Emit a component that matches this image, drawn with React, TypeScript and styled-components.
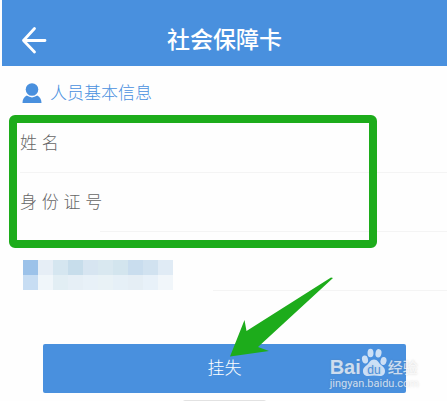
import React from "react";
import styled, { createGlobalStyle } from "styled-components";

const blue = "#4990de";
const green = "#1dac1b";
const line = "#f4f4f4";

const GlobalStyle = createGlobalStyle`
  *, *::before, *::after { box-sizing: border-box; }
  html { overflow: hidden; }
  body {
    margin: 0;
    background: #fff;
    font-family: "Liberation Sans", "Noto Sans CJK SC", sans-serif;
  }
`;

const Screen = styled.main`
  position: relative;
  min-height: 100vh;
  padding-left: 2px;
  overflow: hidden;
  background: #fefefe;
`;

const Header = styled.header`
  display: grid;
  grid-template-columns: 64px 1fr 64px;
  align-items: center;
  height: 66px;
  padding-top: 14px;
  background: ${blue};
  color: #fff;
`;

const BackButton = styled.button`
  display: flex;
  align-items: center;
  height: 40px;
  padding: 0 0 0 19px;
  border: 0;
  background: none;
  color: inherit;
`;

const Title = styled.h1`
  margin: 0;
  font-size: 23px;
  line-height: 32px;
  font-weight: 500;
  text-align: center;
  white-space: nowrap;
`;

const SectionTitle = styled.h2`
  display: flex;
  align-items: flex-start;
  gap: 8px;
  height: 48px;
  margin: 0;
  padding: 16px 20px 0;
  color: ${blue};
  font-size: 17px;
  line-height: 24px;
  font-weight: 300;
`;

const Fields = styled.div`
  position: relative;
`;

const Highlight = styled.div`
  position: absolute;
  top: 1px;
  bottom: -16px;
  left: 7px;
  right: 70px;
  border: 8px solid ${green};
  border-radius: 6px;
  pointer-events: none;
`;

const Row = styled.div<{ $lineStart: number }>`
  display: flex;
  align-items: center;
  height: 59px;
  padding-left: 18px;
  background: linear-gradient(${line}, ${line}) ${(p) => p.$lineStart}px 100% / 100% 1px no-repeat;
`;

const Label = styled.label`
  flex: none;
  color: #666;
  font-size: 17px;
  line-height: 24px;
  font-weight: 300;
`;

const Input = styled.input`
  flex: 1;
  min-width: 0;
  height: 32px;
  margin: 0 16px;
  border: 0;
  outline: 0;
  background: none;
  color: #333;
  font: inherit;
`;

const Mosaic = styled.div`
  display: grid;
  grid-template-columns: repeat(10, 15px);
  grid-auto-rows: 15px;
  padding-left: 3px;
  padding-top: 26px;
`;

const Tile = styled.span<{ $color: string }>`
  background: ${(p) => p.$color};
`;

const Action = styled.div`
  position: relative;
  margin: 53px 41px 0;
`;

const SubmitButton = styled.button`
  display: block;
  width: 100%;
  height: 49px;
  padding: 0;
  border: 0;
  border-radius: 2px;
  background: ${blue};
  color: #fff;
  font: inherit;
  font-size: 17px;
  font-weight: 300;
  line-height: 49px;
`;

const Arrow = styled.svg`
  position: absolute;
  left: calc(50% + 4px);
  bottom: 35px;
  pointer-events: none;
`;

const Watermark = styled.div`
  position: absolute;
  right: -13px;
  bottom: 2px;
  display: flex;
  flex-direction: column;
  align-items: flex-start;
  color: rgba(255, 255, 255, 0.72);
  text-shadow: 0 0 2px rgba(110, 110, 110, 0.28);
  white-space: nowrap;
  pointer-events: none;
`;

const Brand = styled.div`
  display: flex;
  align-items: flex-end;
  height: 29px;
`;

const Latin = styled.span`
  font-size: 20px;
  line-height: 20px;
  font-weight: 700;
`;

const Chinese = styled.span`
  margin-left: 1px;
  font-size: 15px;
  line-height: 18px;
  font-weight: 500;
`;

const Site = styled.span`
  font-family: Roboto, "Noto Sans", sans-serif;
  font-size: 11px;
  line-height: 14px;
`;

const HomeBar = styled.div`
  width: 83px;
  height: 4px;
  margin: 7px auto 0;
  border-radius: 2px;
  background: #e2e2e2;
`;

const tiles = [
  "#9cc2e9", "#e6eef6", "#d5e6f0", "#c7ddeb", "#d7e5f1", "#d9e8f0", "#d3e5ee", "#c9ddee", "#d1e2f0", "#e0ebf5",
  "#c7ddf3", "#f0f6fa", "#e2eef4", "#e6eff6", "#e8f1f8", "#e9f2f6", "#e6f0f7", "#e5eef5", "#e8f1f9", "#f1f6fa",
];

export default function App() {
  return (
    <>
      <GlobalStyle />
      <Screen>
        <Header>
          <BackButton type="button" aria-label="返回">
            <svg width="27" height="28" viewBox="0 0 27 28" fill="none" stroke="currentColor" strokeWidth="2.8" strokeLinecap="round" strokeLinejoin="round">
              <path d="M13.5 2.5 2.5 14.500l11 11.500M2.500 14.500H24" />
            </svg>
          </BackButton>
          <Title>社会保障卡</Title>
        </Header>
        <SectionTitle>
          <svg width="20" height="21" viewBox="0 0 20 21" fill="currentColor" aria-hidden="true">
            <circle cx="10" cy="7.500" r="6.300" />
            <path d="M0.500 21C0.500 17.500 2 15 4.800 13.600Q10 17.200 15.200 13.600C18 15 19.500 17.500 19.500 21Z" />
          </svg>
          人员基本信息
        </SectionTitle>
        <Fields>
          <Row $lineStart={18}>
            <Label htmlFor="name">姓 名</Label>
            <Input id="name" />
          </Row>
          <Row $lineStart={98}>
            <Label htmlFor="idno">身 份 证 号</Label>
            <Input id="idno" />
          </Row>
          <Highlight />
        </Fields>
        <Row $lineStart={211}>
          <Mosaic aria-hidden="true">
            {tiles.map((color, i) => (
              <Tile key={i} $color={color} />
            ))}
          </Mosaic>
        </Row>
        <Action>
          <SubmitButton type="button">挂失</SubmitButton>
          <Watermark>
            <Brand>
              <Latin>Bai</Latin>
              <svg width="26" height="29" viewBox="0 0 26 29" fill="currentColor" aria-hidden="true">
                <ellipse cx="4" cy="11.500" rx="3" ry="4" transform="rotate(-12 4 11.500)" />
                <ellipse cx="9.500" cy="5" rx="3" ry="4.300" />
                <ellipse cx="17.500" cy="5.300" rx="3" ry="4.200" transform="rotate(10 17.5 5.300)" />
                <ellipse cx="22.500" cy="13" rx="3" ry="4" transform="rotate(12 22.500 13)" />
                <path d="M13 11.500c-3.500 0-4.500 3-6.500 5S2 19.500 2 23s2 5 5 5c2 0 4-.5 6-.5s4 .5 6 .5c3 0 5-1.500 5-5s-2.500-4.500-4.500-6.500-3-5-6.500-5Z" />
                <text x="13" y="25.500" textAnchor="middle" fontSize="12" fontWeight="400" fill={blue} fontFamily="Liberation Sans, sans-serif">du</text>
              </svg>
              <Chinese>经验</Chinese>
            </Brand>
            <Site>jingyan.baidu.com</Site>
          </Watermark>
          <Arrow width="106" height="82" viewBox="0 0 106 82" aria-hidden="true">
            <path d="M1 80.500 15.500 44 17.500 55 102 1.500 104 2 29 71 40 75Z" fill={green} />
          </Arrow>
        </Action>
        <HomeBar />
      </Screen>
    </>
  );
}
